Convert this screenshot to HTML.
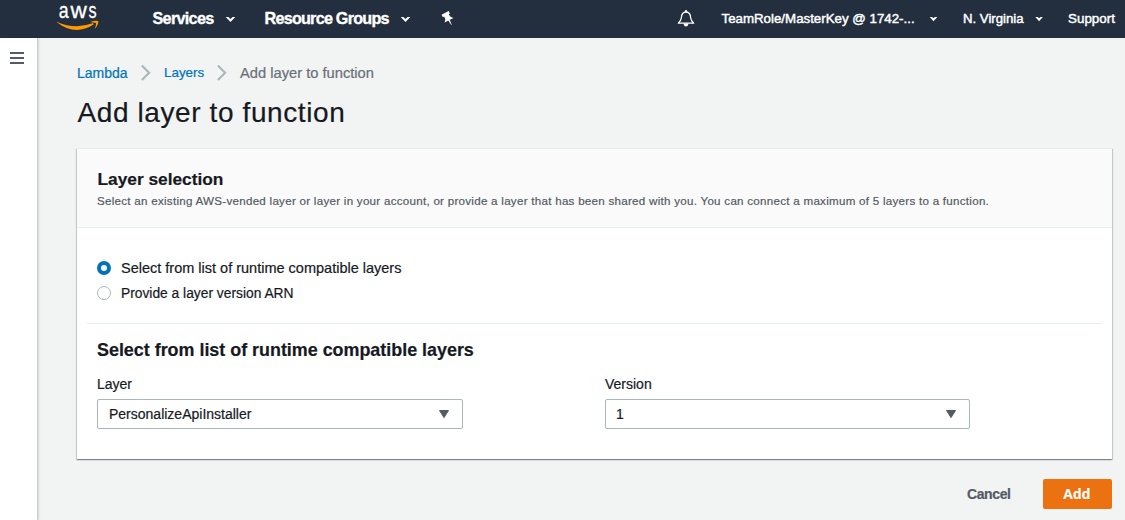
<!DOCTYPE html>
<html><head><meta charset="utf-8">
<style>
*{margin:0;padding:0;box-sizing:border-box}
html,body{width:1125px;height:520px;overflow:hidden;background:#f2f3f3;font-family:"Liberation Sans",sans-serif;color:#16191f}
.a{position:absolute;white-space:nowrap;-webkit-text-stroke:0.2px currentColor}
#nav{position:absolute;left:0;top:0;width:1125px;height:38px;background:#232f3e}
#nav .t{position:absolute;color:#fff;font-weight:bold;line-height:20px;top:8.5px}
#side{position:absolute;left:0;top:38px;width:38px;height:482px;background:#fff;border-right:1px solid #c7cccc;box-shadow:1px 0 2px rgba(0,28,36,.12)}
#card{position:absolute;left:77px;top:148px;width:1035px;height:311px;background:#fff;box-shadow:0 1px 1px 0 rgba(0,28,36,.3),1px 1px 1px 0 rgba(0,28,36,.15),-1px 1px 1px 0 rgba(0,28,36,.15)}
#chead{position:absolute;left:0;top:0;width:1035px;height:80px;background:#fafafa;border-top:1px solid #eaeded;border-bottom:1px solid #eaeded}
.sel{position:absolute;top:251px;height:30px;border:1px solid #aab7b8;border-radius:2px;background:#fff}
.sel .v{position:absolute;left:11px;top:5px;font-size:14px;line-height:18px;color:#16191f;white-space:nowrap;-webkit-text-stroke:0.2px currentColor}
</style></head>
<body>
<div id="nav">
  <svg style="position:absolute;left:0;top:0" width="110" height="38" viewBox="0 0 110 38">
    <g fill="#fff" stroke="#fff" stroke-width="1.4" font-family="Liberation Sans" font-size="100"><text transform="translate(58.8,18.2) scale(0.178,0.224)">a</text><text transform="translate(70.5,18.2) scale(0.226,0.224)">w</text><text transform="translate(88.4,18.2) scale(0.162,0.224)">s</text></g>
    <path d="M56.6,21.9 Q75,36.6 93.6,24.5 L93.2,23.1 Q75,30 56.6,21.7 Z" fill="#ff9900"/>
    <path d="M90.2,21.9 Q94.5,20.3 98.3,20.9 Q98.6,24.6 94.8,28.9 Q96.4,25 96,23.1 Q93.8,22.3 90.2,21.9 Z" fill="#ff9900"/>
  </svg>
  <div class="t" style="left:152.5px;top:8px;font-size:16.2px;letter-spacing:-0.7px;-webkit-text-stroke:0.35px #fff">Services</div>
  <svg style="position:absolute;left:0;top:0" width="1125" height="38" viewBox="0 0 1125 38"><g fill="#fff"><polygon points="225.7,16.9 228.4,16.9 230.5,19.0 232.6,16.9 235.3,16.9 230.5,22.1"/><polygon points="400.7,16.9 403.4,16.9 405.5,19.0 407.6,16.9 410.3,16.9 405.5,22.1"/><polygon points="929.7,16.9 932.1,16.9 933.5,18.3 934.9,16.9 937.3,16.9 933.5,21.2"/><polygon points="1035.3,16.9 1037.7,16.9 1039.1,18.3 1040.5,16.9 1042.9,16.9 1039.1,21.2"/></g><g transform="translate(445.1,12.9) rotate(-28)" fill="#fff"><path d="M-4,0 L4,0 L4,2.6 L2.6,3.1 L2.9,6 L5,8.3 L-5,8.3 L-2.9,6 L-2.6,3.1 L-4,2.6 Z"/><path d="M-0.8,8 L0.8,8 L0.25,13.6 L-0.25,13.6 Z"/></g><path d="M678.3,23.2 L693.7,23.2 Q691,21 690.6,17.5 Q690.4,12.2 686,12.2 Q681.6,12.2 681.4,17.5 Q681,21 678.3,23.2 Z" stroke="#fff" stroke-width="1.3" fill="none" stroke-linejoin="round"/><circle cx="686" cy="11.2" r="1.2" fill="#fff"/><path d="M683.6,23.6 L688.4,23.6 Q688.2,26.6 686,26.6 Q683.8,26.6 683.6,23.6 Z" fill="#fff"/></svg>
  <div class="t" style="left:264.5px;top:8px;font-size:16.2px;letter-spacing:-0.77px;-webkit-text-stroke:0.35px #fff">Resource Groups</div>
  
  
  
  <div class="t" style="left:721.5px;top:9px;font-size:13.3px;font-weight:normal;-webkit-text-stroke:0.45px #fff">TeamRole/MasterKey @ 1742-...</div>
  
  <div class="t" style="left:963px;top:9px;font-size:13.2px;font-weight:normal;-webkit-text-stroke:0.45px #fff">N. Virginia</div>
  
  <div class="t" style="left:1068px;top:9px;font-size:13.4px;font-weight:normal;-webkit-text-stroke:0.45px #fff">Support</div>
</div>
<div id="side">
  <div style="position:absolute;left:10px;top:14px;width:14px;height:2px;background:#545b64"></div>
  <div style="position:absolute;left:10px;top:19px;width:14px;height:2px;background:#545b64"></div>
  <div style="position:absolute;left:10px;top:24px;width:14px;height:2px;background:#545b64"></div>
</div>

<div class="a" style="left:77px;top:64px;font-size:14px;line-height:18px;color:#0073bb">Lambda</div>
<svg style="position:absolute;left:140px;top:65px" width="12" height="16" viewBox="0 0 12 16"><path d="M1.9 0.5 L9.1 7.8 L1.9 15.1" stroke="#aab7b8" stroke-width="2.1" fill="none"/></svg>
<div class="a" style="left:164px;top:64px;font-size:13.4px;line-height:18px;color:#0073bb">Layers</div>
<svg style="position:absolute;left:216px;top:65px" width="12" height="16" viewBox="0 0 12 16"><path d="M1.9 0.5 L9.1 7.8 L1.9 15.1" stroke="#aab7b8" stroke-width="2.1" fill="none"/></svg>
<div class="a" style="left:240px;top:64px;font-size:14.7px;line-height:18px;color:#687078">Add layer to function</div>

<div class="a" style="left:77.5px;top:96px;font-size:28px;line-height:34px;letter-spacing:0.6px;color:#16191f">Add layer to function</div>

<div id="card">
  <div id="chead">
    <div class="a" style="left:20.5px;top:19px;font-size:17.3px;line-height:22px;font-weight:bold;color:#16191f">Layer selection</div>
    <div class="a" style="left:20px;top:44px;font-size:11.6px;letter-spacing:0.267px;line-height:16px;color:#545b64">Select an existing AWS-vended layer or layer in your account, or provide a layer that has been shared with you. You can connect a maximum of 5 layers to a function.</div>
  </div>
  <div style="position:absolute;left:20px;top:113px;width:14px;height:14px;border-radius:50%;background:#0073bb"><div style="position:absolute;left:4px;top:4px;width:6px;height:6px;border-radius:50%;background:#fff"></div></div>
  <div class="a" style="left:44px;top:111px;font-size:14.5px;line-height:18px;color:#16191f">Select from list of runtime compatible layers</div>
  <div style="position:absolute;left:20px;top:138px;width:14px;height:14px;border-radius:50%;border:1px solid #aab7b8;background:#fff"></div>
  <div class="a" style="left:44px;top:137px;font-size:13.8px;line-height:18px;color:#16191f">Provide a layer version ARN</div>
  <div style="position:absolute;left:10px;top:175px;width:1015px;height:1px;background:#eaeded"></div>
  <div class="a" style="left:20px;top:191px;font-size:17.9px;line-height:22px;font-weight:bold;color:#16191f">Select from list of runtime compatible layers</div>
  <div class="a" style="left:20px;top:227px;font-size:14px;line-height:18px;color:#16191f">Layer</div>
  <div class="sel" style="left:20px;width:366px"><div class="v">PersonalizeApiInstaller</div><svg style="position:absolute;left:340px;top:9px" width="12" height="11"><path d="M1.5,1.5 L10.5,1.5 L6,8.6 Z" fill="#545b64" stroke="#545b64" stroke-width="1" stroke-linejoin="round"/></svg></div>
  <div class="a" style="left:528px;top:227px;font-size:14px;line-height:18px;color:#16191f">Version</div>
  <div class="sel" style="left:528px;width:365px"><div class="v" style="left:10px">1</div><svg style="position:absolute;left:339px;top:9px" width="12" height="11"><path d="M1.5,1.5 L10.5,1.5 L6,8.6 Z" fill="#545b64" stroke="#545b64" stroke-width="1" stroke-linejoin="round"/></svg></div>
</div>

<div class="a" style="left:967px;top:485px;font-size:14px;letter-spacing:-0.4px;line-height:18px;font-weight:bold;color:#545b64">Cancel</div>
<div style="position:absolute;left:1043px;top:479px;width:69px;height:30px;background:#ec7211;border-radius:2px"></div>
<div class="a" style="left:1063px;top:485px;font-size:14px;line-height:18px;font-weight:bold;color:#fff">Add</div>
</body></html>
